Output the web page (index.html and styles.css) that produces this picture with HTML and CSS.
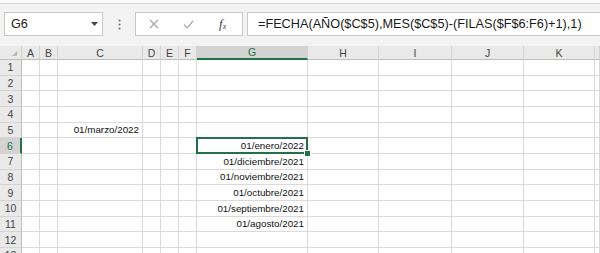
FILE: index.html
```html
<!DOCTYPE html>
<html lang="es">
<head>
    <meta charset="UTF-8">
    <title>Hoja de cálculo</title>
    <link rel="stylesheet" href="styles.css">
</head>
<body>
    <div class="ribbon-edge"></div>

    <div class="formula-bar">
        <div class="name-box">
            <span>G6</span>
            <svg class="drop" width="7" height="4" viewBox="0 0 7 4"><path d="M0 0H7L3.5 4Z" fill="#444"/></svg>
        </div>
        <div class="grip">
            <svg width="3" height="11" viewBox="0 0 3 11"><circle cx="1.5" cy="1.5" r="1.1" fill="#777"/><circle cx="1.5" cy="5.5" r="1.1" fill="#777"/><circle cx="1.5" cy="9.5" r="1.1" fill="#777"/></svg>
        </div>
        <div class="fx-box">
            <svg class="btn cancel" width="10" height="10" viewBox="0 0 10 10"><path d="M1 1L9 9M9 1L1 9" stroke="#a6a6a6" stroke-width="1.2" fill="none"/></svg>
            <svg class="btn enter" width="11" height="9" viewBox="0 0 11 9"><path d="M1 4.5L4 7.8L10 1" stroke="#a6a6a6" stroke-width="1.2" fill="none"/></svg>
            <span class="fx">f<sub>x</sub></span>
        </div>
        <div class="formula-input">=FECHA(AÑO($C$5),MES($C$5)-(FILAS($F$6:F6)+1),1)</div>
    </div>

    <div class="sheet" id="sheet"></div>

    <script>
        // the last entry is the sliver of column L at the window edge
        const columns = ['A', 'B', 'C', 'D', 'E', 'F', 'G', 'H', 'I', 'J', 'K', ''];
        const rowCount = 13;
        const activeCol = 'G';
        const activeRow = 6;

        const values = {
            C5: '01/marzo/2022',
            G6: '01/enero/2022',
            G7: '01/diciembre/2021',
            G8: '01/noviembre/2021',
            G9: '01/octubre/2021',
            G10: '01/septiembre/2021',
            G11: '01/agosto/2021'
        };

        const sheet = document.getElementById('sheet');

        function addCell(className, text) {
            const cell = document.createElement('div');
            cell.className = className;
            if (text) cell.textContent = text;
            sheet.appendChild(cell);
            return cell;
        }

        // header row
        addCell('corner');
        columns.forEach(col => {
            addCell(col === activeCol ? 'col-head active' : 'col-head', col);
        });

        // data rows
        for (let r = 1; r <= rowCount; r++) {
            addCell(r === activeRow ? 'row-head active' : 'row-head', r);
            columns.forEach(col => {
                const cell = addCell('cell', values[col + r]);
                if (col === activeCol && r === activeRow) cell.classList.add('selected');
            });
        }
    </script>
</body>
</html>
```

FILE: styles.css
```css
body {
    margin: 0;
    width: 600px;
    height: 253px;
    overflow: hidden;
    background-color: #fff;
    font-family: "Liberation Sans", Arial, sans-serif;
    color: #222;
}

.ribbon-edge {
    height: 3px;
    background-color: #fafafa;
    border-bottom: 1px solid #d6d6d6;
}

/* Name box + formula bar */
.formula-bar {
    display: flex;
    align-items: flex-start;
    height: 42px;
    padding: 8px 0 0 4px;
    box-sizing: border-box;
    background-color: #f3f3f3;
    white-space: nowrap;
}

.name-box {
    display: flex;
    align-items: center;
    justify-content: space-between;
    width: 99px;
    height: 24px;
    padding: 0 4px 0 6px;
    box-sizing: border-box;
    border: 1px solid #c9c9c9;
    background-color: #fff;
    font-size: 12.7px;
}

.grip {
    display: flex;
    align-items: center;
    justify-content: center;
    width: 32px;
    height: 24px;
}

.fx-box {
    display: flex;
    align-items: center;
    width: 108px;
    height: 24px;
    box-sizing: border-box;
    border: 1px solid #c9c9c9;
    background-color: #fff;
}

.fx-box .cancel {
    margin-left: 13px;
}

.fx-box .enter {
    margin-left: 24px;
}

.fx {
    margin-left: 25px;
    font-family: "Liberation Serif", serif;
    font-style: italic;
    font-size: 13px;
    color: #444;
}

.fx sub {
    font-size: 8px;
    vertical-align: -1px;
}

.formula-input {
    flex: 1;
    min-width: 0;
    height: 24px;
    margin-left: 4px;
    padding-left: 10px;
    box-sizing: border-box;
    border: 1px solid #c9c9c9;
    border-right: none;
    background-color: #fff;
    font-size: 12.7px;
    line-height: 22px;
    color: #1a1a1a;
}

/* Grid */
.sheet {
    display: grid;
    grid-template-columns: 22px 18px 18px 85px 18px 18px 18px 111px 71px 73px 72px 71px 1fr;
    grid-template-rows: 14px repeat(13, 15.67px);
    font-size: 9.8px;
}

.corner,
.col-head,
.row-head {
    background-color: #e9e9e9;
    color: #444;
    box-sizing: border-box;
}

.corner {
    position: relative;
    border-right: 1px solid #cfcfcf;
    border-bottom: 1px solid #bdbdbd;
}

.corner::after {
    content: "";
    position: absolute;
    right: 4px;
    bottom: 3px;
    border-left: 5px solid transparent;
    border-bottom: 5px solid #b8b8b8;
}

.col-head {
    display: flex;
    align-items: center;
    justify-content: center;
    border-right: 1px solid #d4d4d4;
    border-bottom: 1px solid #bdbdbd;
    font-size: 10.5px;
}

.col-head.active {
    background-color: #d3d3d3;
    color: #217346;
    border-bottom: 2px solid #217346;
}

.row-head {
    display: flex;
    align-items: center;
    justify-content: center;
    border-right: 1px solid #bdbdbd;
    border-bottom: 1px solid #d4d4d4;
    font-size: 10.5px;
}

.row-head.active {
    background-color: #d3d3d3;
    color: #217346;
    border-right: 2px solid #217346;
}

.cell {
    display: flex;
    align-items: center;
    justify-content: flex-end;
    padding-right: 3px;
    box-sizing: border-box;
    border-right: 1px solid #dadada;
    border-bottom: 1px solid #dadada;
    color: #111;
    white-space: nowrap;
}

/* active cell outline and fill handle */
.cell.selected {
    position: relative;
}

.cell.selected::before {
    content: "";
    position: absolute;
    left: -1px;
    top: -1px;
    right: -1px;
    bottom: -1px;
    border: 2px solid #217346;
}

.cell.selected::after {
    content: "";
    position: absolute;
    right: -4px;
    bottom: -4px;
    width: 5px;
    height: 5px;
    background-color: #217346;
    border: 1px solid #fff;
}
```
